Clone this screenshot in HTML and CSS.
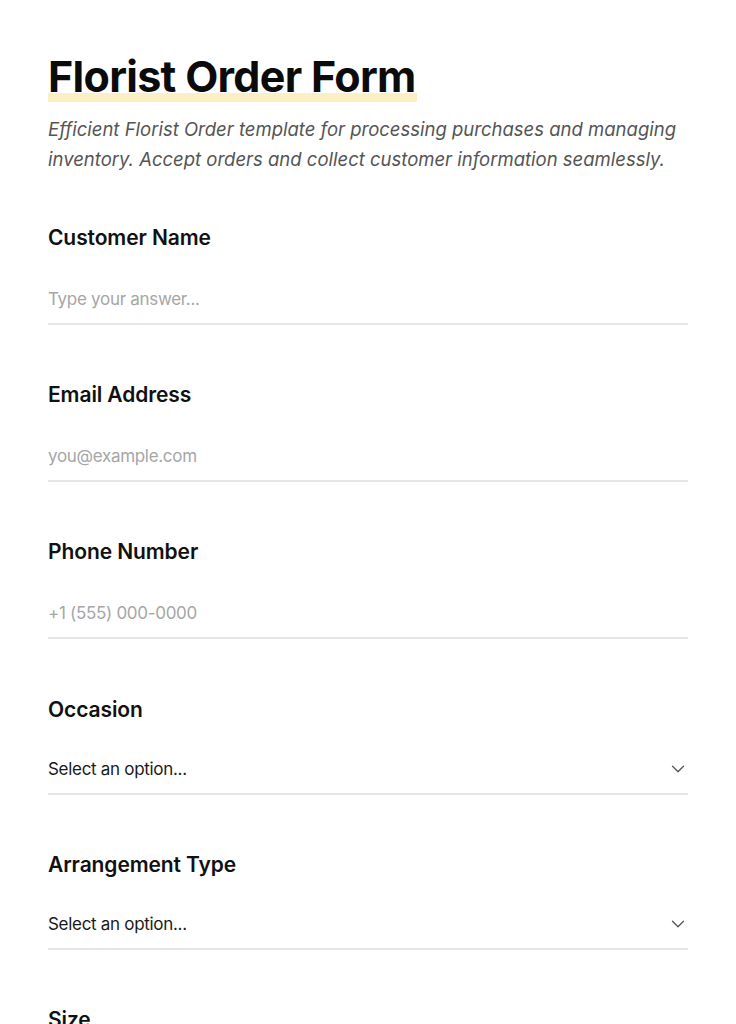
FILE: index.html
```html
<!DOCTYPE html>
<html lang="en">
<head>
<meta charset="utf-8">
<title>Florist Order Form</title>
<link rel="stylesheet" href="styles.css">
</head>
<body>
<main class="form">
  <header class="form-header">
    <h1 class="title"><span class="title-mark">Florist Order Form</span></h1>
    <p class="subtitle">Efficient Florist Order template for processing purchases and managing inventory. Accept orders and collect customer information seamlessly.</p>
  </header>

  <div class="field">
    <label class="label">Customer Name</label>
    <div class="input">Type your answer...</div>
  </div>

  <div class="field">
    <label class="label">Email Address</label>
    <div class="input">you@example.com</div>
  </div>

  <div class="field">
    <label class="label">Phone Number</label>
    <div class="input">+1 (555) 000-0000</div>
  </div>

  <div class="field field-select">
    <label class="label">Occasion</label>
    <div class="select">
      <span>Select an option...</span>
      <svg class="chev" width="14" height="8" viewBox="0 0 14 8"><path d="M1.5 1.2l5.5 5.5 5.5-5.5" fill="none" stroke="#555" stroke-width="1.3" stroke-linecap="round" stroke-linejoin="round"/></svg>
    </div>
  </div>

  <div class="field field-select">
    <label class="label">Arrangement Type</label>
    <div class="select">
      <span>Select an option...</span>
      <svg class="chev" width="14" height="8" viewBox="0 0 14 8"><path d="M1.5 1.2l5.5 5.5 5.5-5.5" fill="none" stroke="#555" stroke-width="1.3" stroke-linecap="round" stroke-linejoin="round"/></svg>
    </div>
  </div>

  <div class="field field-select">
    <label class="label">Size</label>
    <div class="select">
      <span>Select an option...</span>
      <svg class="chev" width="14" height="8" viewBox="0 0 14 8"><path d="M1.5 1.2l5.5 5.5 5.5-5.5" fill="none" stroke="#555" stroke-width="1.3" stroke-linecap="round" stroke-linejoin="round"/></svg>
    </div>
  </div>
</main>
</body>
</html>
```
FILE: styles.css
```css
html, body {
  margin: 0;
  padding: 0;
  background: #ffffff;
}
body {
  font-family: "Inter", "Liberation Sans", sans-serif;
  color: #111;
}
.form {
  width: 640px;
  padding: 50px 48px 0;
}
.title {
  margin: 0;
  font-size: 43px;
  line-height: 52px;
  font-weight: 700;
  letter-spacing: -0.7px;
  color: #0b0b0b;
}
.title-mark {
  background: linear-gradient(to bottom, transparent 0, transparent 43px, #fdefc4 43px, #fdefc4 55px);
  padding-right: 1px;
}
.subtitle {
  margin: 12px 0 0;
  font-size: 18.5px;
  line-height: 30px;
  font-style: italic;
  color: #555;
  letter-spacing: 0;
}
.field {
  margin-top: 50px;
}
.field + .field {
  margin-top: 56px;
}
.field + .field-select {
  margin-top: 57px;
}
.field-select + .field-select {
  margin-top: 56px;
}
.label {
  display: block;
  font-size: 21px;
  line-height: 28px;
  font-weight: 600;
  letter-spacing: -0.1px;
  color: #111;
}
.input {
  margin-top: 35px;
  padding-bottom: 12px;
  font-size: 17px;
  line-height: 24px;
  color: #a6a6a6;
  letter-spacing: -0.3px;
  border-bottom: 2px solid #e5e5e5;
}
.select {
  margin-top: 33px;
  padding-bottom: 12px;
  display: flex;
  align-items: center;
  justify-content: space-between;
  font-size: 17px;
  line-height: 24px;
  color: #1a1a1a;
  letter-spacing: -0.3px;
  border-bottom: 2px solid #e5e5e5;
}
.chev {
  margin-right: 3px;
}
```
